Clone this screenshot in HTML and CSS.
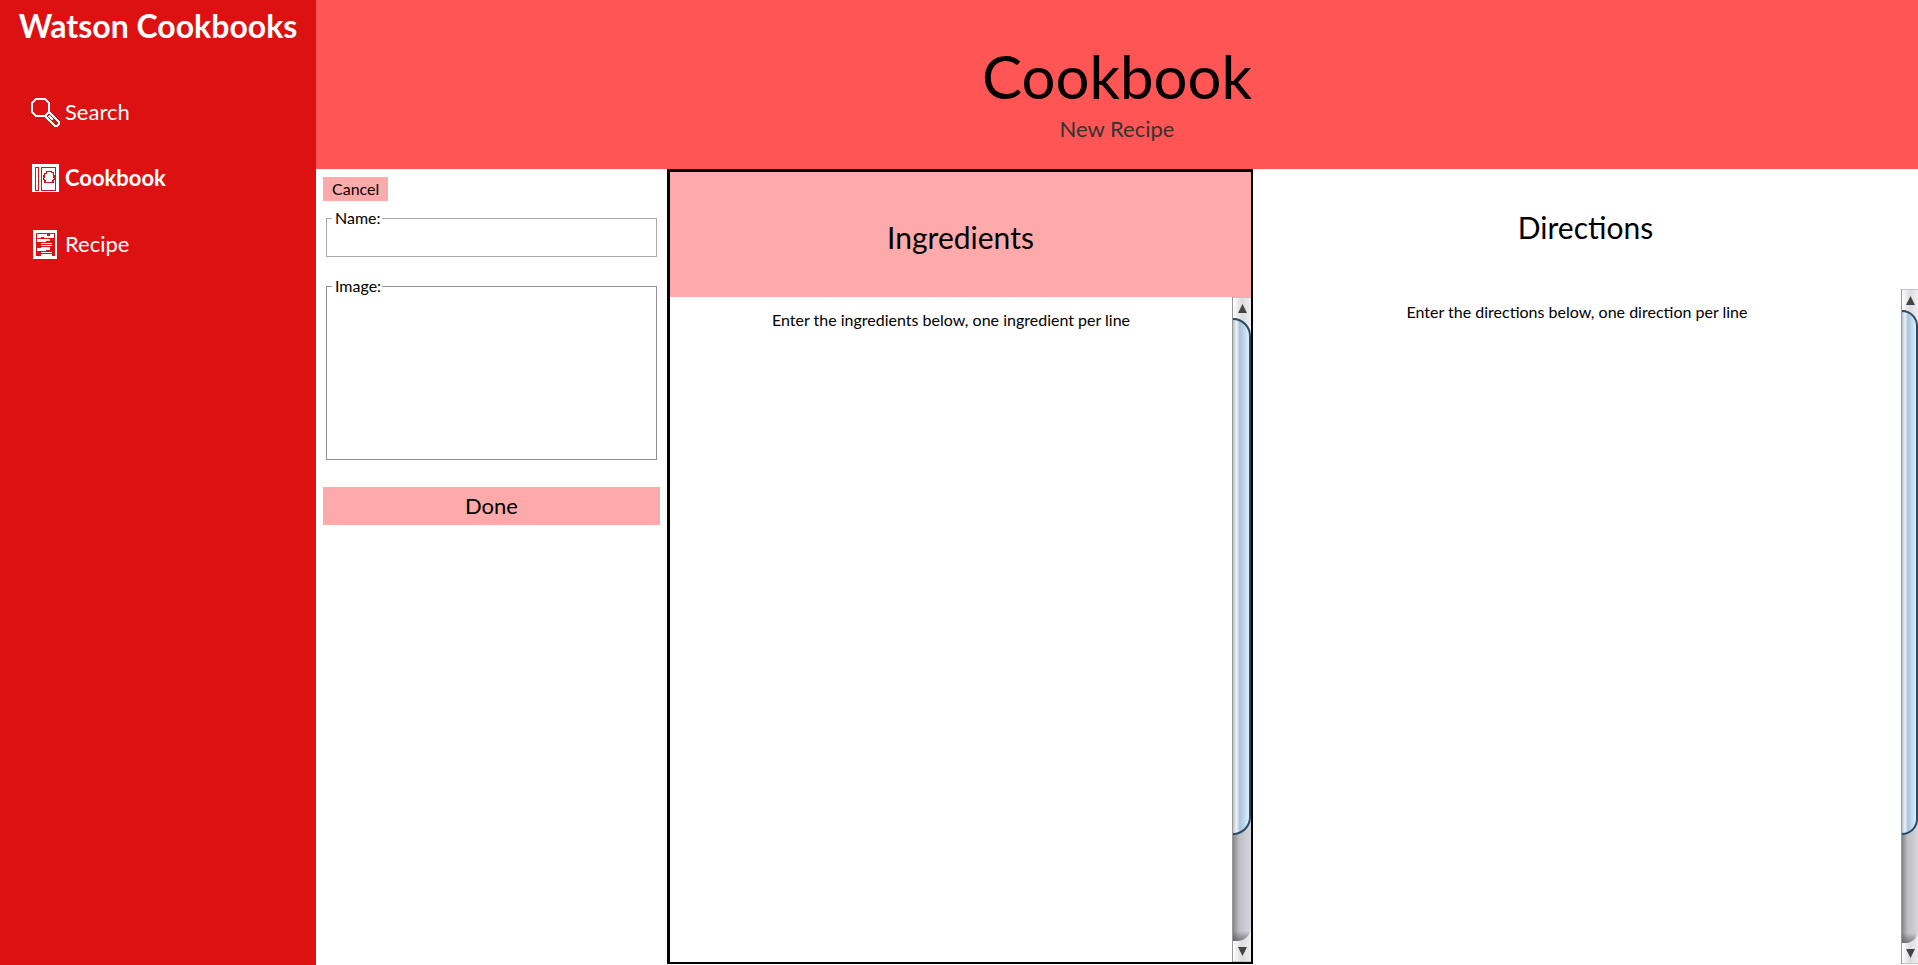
FILE: index.html
```html
<!DOCTYPE html>
<html lang="en">
<head>
<meta charset="utf-8">
<title>Watson Cookbooks</title>
<link rel="stylesheet" href="styles.css">
</head>
<body>
<div class="app">
  <aside class="sidebar">
    <h2 class="brand">Watson Cookbooks</h2>
    <nav class="nav">
      <a class="nav-item" href="#search">
        <svg class="icon" width="29" height="29" viewBox="0 0 29 29" shape-rendering="crispEdges" fill="none" stroke="#fff" stroke-width="2" aria-hidden="true"><path d="M5 1H14L18 5V14L14 18H5L1 14V5Z"/><path d="M15 17V19L24 28H26L28 26V24L19 15H17M18 18L22 22"/></svg>
        <span>Search</span>
      </a>
      <a class="nav-item active" href="#cookbook">
        <svg class="icon" width="29" height="28" viewBox="-1 0 29 28" shape-rendering="crispEdges" aria-hidden="true"><path fill="#fff" d="M0 0H27V28H0Z"/><path fill="none" stroke="#d11" d="M3.500 3.500H6.500V26.500H3.500ZM9.500 3.500H23.500V26.500H9.500ZM14.500 8.500V7.500H19.500V8.500H21.500V11.500H22.500V15.500H21.500V18.500H12.500V15.500H11.500V11.500H12.500V9.500H14.500"/><path fill="#d11" d="M11 11H13V14H11ZM21 11H23V14H21ZM12 16H14V19H12ZM20 16H22V19H20Z"/></svg>
        <span>Cookbook</span>
      </a>
      <a class="nav-item" href="#recipe">
        <svg class="icon" width="29" height="29" viewBox="-2 0 29 29" shape-rendering="crispEdges" aria-hidden="true"><path fill="#fff" d="M0 0H24V29H0Z"/><path fill="#d11" d="M3 3H22V26H3Z"/><path fill="#fff" d="M4 4H14V6H17V4H21V8H11V7H8V8H4ZM4 9H17V11H13V12H4ZM8 13H19V14H8ZM8 15H19V16H8ZM8 17H17V18H8ZM4 18H17V20H13V21H4ZM8 22H19V23H8ZM8 24H19V26H8Z"/></svg>
        <span>Recipe</span>
      </a>
    </nav>
  </aside>
  <main class="main">
    <header class="header">
      <h1 class="title">Cookbook</h1>
      <p class="subtitle">New Recipe</p>
    </header>
    <div class="columns">
      <form class="form">
        <button class="button cancel" type="button">Cancel</button>
        <fieldset class="field name">
          <legend><label for="name">Name:</label></legend>
          <input class="input" id="name" type="text">
        </fieldset>
        <fieldset class="field image">
          <legend>Image:</legend>
        </fieldset>
        <button class="button done" type="submit">Done</button>
      </form>
      <section class="panel ingredients">
        <h2 class="panel-title">Ingredients</h2>
        <div class="panel-body">
          <div class="editor">
            <label for="ingredients">Enter the ingredients below, one ingredient per line</label>
            <textarea class="input" id="ingredients"></textarea>
          </div>
          <div class="scrollbar">
            <button class="arrow" type="button" aria-label="Scroll up"><svg width="9" height="9" viewBox="0 0 9 9"><path fill="#444" d="M4.500 0L9 9H0Z"/></svg></button>
            <div class="track"><div class="thumb"></div></div>
            <button class="arrow" type="button" aria-label="Scroll down"><svg width="9" height="9" viewBox="0 0 9 9"><path fill="#444" d="M0 0H9L4.500 9Z"/></svg></button>
          </div>
        </div>
      </section>
      <section class="panel directions">
        <h2 class="panel-title">Directions</h2>
        <div class="panel-body">
          <div class="editor">
            <label for="directions">Enter the directions below, one direction per line</label>
            <textarea class="input" id="directions"></textarea>
          </div>
          <div class="scrollbar">
            <button class="arrow" type="button" aria-label="Scroll up"><svg width="9" height="9" viewBox="0 0 9 9"><path fill="#444" d="M4.500 0L9 9H0Z"/></svg></button>
            <div class="track"><div class="thumb"></div></div>
            <button class="arrow" type="button" aria-label="Scroll down"><svg width="9" height="9" viewBox="0 0 9 9"><path fill="#444" d="M0 0H9L4.500 9Z"/></svg></button>
          </div>
        </div>
      </section>
    </div>
  </main>
</div>
</body>
</html>
```

FILE: styles.css
```css
* { box-sizing: border-box; }
body {
  margin: 0;
  background: #fff;
  color: #000;
  font: 16px/20px "Gill Sans MT", "Gill Sans", Lato, sans-serif;
}
h1, h2, p { margin: 0; font-weight: 400; }
button, input, textarea { font: inherit; color: inherit; }

.app { display: flex; min-height: 100vh; }
.sidebar {
  flex: 0 0 316px;
  background: #d11;
  color: #fff;
}
.brand {
  padding-top: 6px;
  font-size: 32px;
  line-height: 40px;
  font-weight: 700;
  text-align: center;
}
.nav {
  display: flex;
  flex-direction: column;
  gap: 26px;
  padding: 46px 0 0 31px;
}
.nav-item {
  display: flex;
  align-items: center;
  gap: 5px;
  height: 40px;
  color: inherit;
  font-size: 22px;
  text-decoration: none;
}
.nav-item.active { font-weight: 700; }

.main { flex: 1; display: flex; flex-direction: column; min-width: 0; }
.header {
  padding: 40px 0 25px;
  background: #f55;
  text-align: center;
}
.title { font-size: 60px; line-height: 72px; }
.subtitle {
  padding-top: 2px;
  color: #333;
  font-size: 22px;
  line-height: 30px;
}
.columns {
  flex: 1;
  display: grid;
  grid-template-columns: 351px 586fr 665fr;
}

.form {
  display: flex;
  flex-direction: column;
  padding: 8px 7px;
}
.button { border: 0; padding: 0; background: #faa; }
.cancel { align-self: flex-start; padding: 2px 9px; }
.done { height: 38px; font-size: 22px; }
.field {
  min-width: 0;
  margin: 7px 3px 0;
  padding: 0 5px;
  border: 1px solid #aaa;
}
.field legend { padding: 0 1px 0 3px; }
.name { height: 49px; }
.image {
  height: 184px;
  margin: 19px 3px 27px;
  border-color: #919193;
}
.input {
  display: block;
  width: 100%;
  padding: 0;
  border: 0;
  outline: 0;
  background: transparent;
  resize: none;
}

.panel { display: flex; flex-direction: column; min-width: 0; }
.ingredients {
  margin-bottom: 1px;
  border: solid #000;
  border-width: 3px 2px 2px 3px;
}
.panel-title {
  padding: 45px 0 40px;
  font-size: 30px;
  line-height: 40px;
  text-align: center;
}
.ingredients .panel-title { background: #faa; }
.directions .panel-title { padding: 38px 0 42px; }
.directions { margin-bottom: 1px; }
.panel-body { flex: 1; display: flex; }
.editor {
  flex: 1;
  display: flex;
  flex-direction: column;
  gap: 10px;
  padding: 13px 10px 10px;
  text-align: center;
}
.editor .input { flex: 1; text-align: left; }

.scrollbar {
  flex: 0 0 19px;
  display: flex;
  flex-direction: column;
  border-left: 1px solid #999;
  background: linear-gradient(90deg, #fff, #dcdcde 50%, #f0f0f2);
}
.directions .scrollbar { flex-basis: 17px; }
.arrow {
  display: flex;
  align-items: center;
  justify-content: center;
  height: 21px;
  padding: 0;
  border: 1px solid #c4c4c6;
  border-width: 1px 0;
  background: none;
}
.arrow:first-child { border-bottom: 0; }
.arrow:last-child { border-top: 0; }
.track {
  flex: 1;
  border-radius: 0 18px 14px 0;
  background:
    linear-gradient(0deg, #555a, #5550 10px),
    linear-gradient(90deg, #858588, #bebec4 35%, #d6d6dc);
}
.thumb {
  height: 83%;
  border: 2px solid #2b4a66;
  border-left: 0;
  border-radius: 0 18px 18px 0;
  background: linear-gradient(90deg, #b9c2ca, #edf2f6 22%, #a9c3db 42%, #c5dcf0 75%, #dff1ff);
}
```
